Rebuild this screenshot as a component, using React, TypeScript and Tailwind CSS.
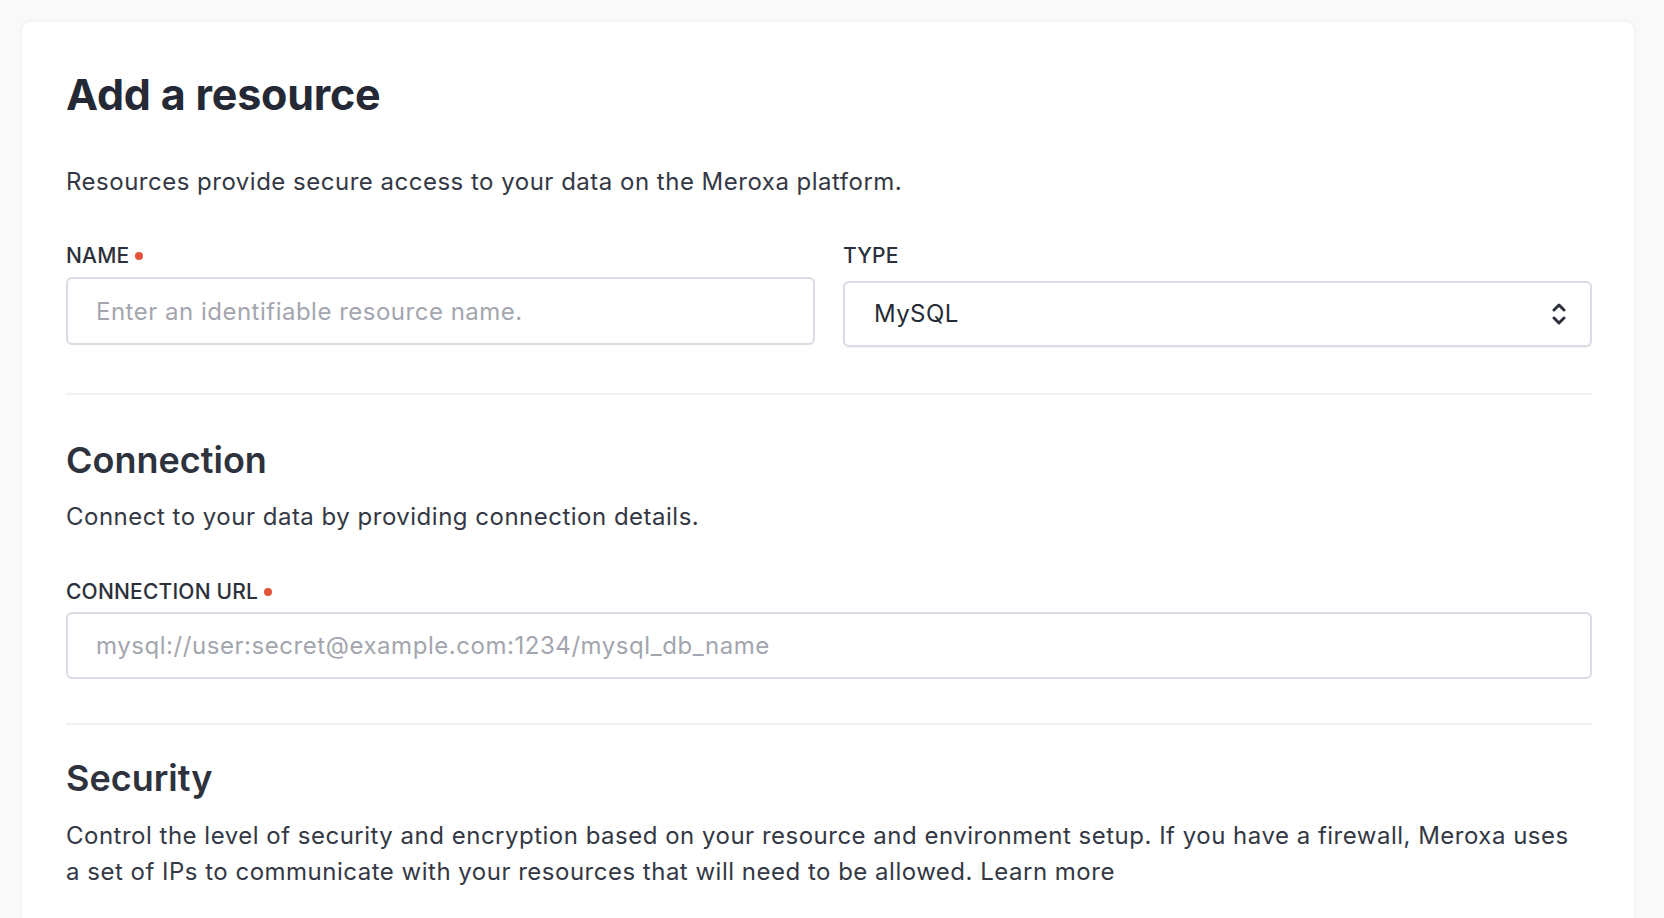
import React from 'react';

type FieldLabelProps = {
  text: string;
  required?: boolean;
};

function FieldLabel({ text, required }: FieldLabelProps) {
  return (
    <div className="flex items-center h-[30px] text-[21px] font-medium text-[#2b303b] leading-[30px] tracking-[0.2px]">
      <span>{text}</span>
      {required && <span className="ml-[6px] w-[8px] h-[8px] rounded-full bg-[#e2553a]" />}
    </div>
  );
}

function UpDownIcon() {
  return (
    <svg width="14" height="26" viewBox="0 0 14 26" fill="none">
      <polyline points="2,9 7,4 12,9" stroke="#2b303b" strokeWidth="3" strokeLinecap="round" strokeLinejoin="round" />
      <polyline points="2,17 7,22 12,17" stroke="#2b303b" strokeWidth="3" strokeLinecap="round" strokeLinejoin="round" />
    </svg>
  );
}

export default function App() {
  return (
    <div
      className="min-h-screen bg-[#f9f9f9] pt-[22px] pl-[22px] pr-[30px] overflow-hidden"
      style={{ fontFamily: 'Inter, "Noto Sans", sans-serif' }}
    >
      <div className="bg-white rounded-lg shadow-[0_0_4px_rgba(0,0,0,0.06)] pl-[44px] pr-[42px] pt-[46px] pb-[60px]">
        <h1 className="text-[43px] leading-[53px] font-bold tracking-[-0.2px] text-[#242935]">Add a resource</h1>
        <p className="mt-[43px] text-[24px] leading-[36px] tracking-[0.5px] text-[#333844]">
          Resources provide secure access to your data on the Meroxa platform.
        </p>

        <div className="mt-[41px] grid grid-cols-2 gap-[28px]">
          <div>
            <FieldLabel text="NAME" required />
            <input
              className="mt-[6px] w-full h-[68px] rounded-md border-2 border-[#dadce5] px-[28px] text-[24px] tracking-[0.5px] text-[#333844] placeholder:text-[#a3a6ae] outline-none"
              placeholder="Enter an identifiable resource name."
            />
          </div>
          <div>
            <FieldLabel text="TYPE" />
            <div className="mt-[10px] h-[66px] rounded-md border-2 border-[#dadce5] shadow-[0_1px_2px_rgba(0,0,0,0.05)] pl-[29px] pr-[24px] flex items-center justify-between">
              <span className="text-[24px] tracking-[0.4px] text-[#262b36]">MySQL</span>
              <UpDownIcon />
            </div>
          </div>
        </div>

        <div className="mt-[46px] h-[2px] bg-[#f1f2f4]" />

        <h2 className="mt-[43px] text-[36px] leading-[45px] font-semibold text-[#2d323d]">Connection</h2>
        <p className="mt-[16px] text-[24px] leading-[36px] tracking-[0.5px] text-[#333844]">
          Connect to your data by providing connection details.
        </p>

        <div className="mt-[42px]">
          <FieldLabel text="CONNECTION URL" required />
          <input
            className="mt-[5px] w-full h-[67px] rounded-md border-2 border-[#dadce5] px-[28px] text-[24px] tracking-[0.55px] text-[#333844] placeholder:text-[#a3a6ae] outline-none"
            placeholder="mysql://user:secret@example.com:1234/mysql_db_name"
          />
        </div>

        <div className="mt-[44px] h-[2px] bg-[#f1f2f4]" />

        <h2 className="mt-[31px] text-[36px] leading-[45px] font-semibold text-[#2d323d]">Security</h2>
        <p className="mt-[17px] max-w-[1515px] text-[24px] leading-[36px] tracking-[0.5px] text-[#333844]">
          Control the level of security and encryption based on your resource and environment setup. If you have a
          firewall, Meroxa uses a set of IPs to communicate with your resources that will need to be allowed. Learn more
        </p>
      </div>
    </div>
  );
}
